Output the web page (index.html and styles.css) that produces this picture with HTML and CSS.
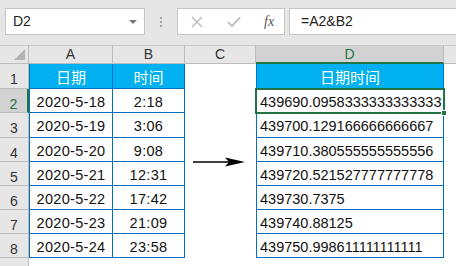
FILE: index.html
```html
<!DOCTYPE html>
<html lang="zh-CN">
<head>
  <meta charset="UTF-8">
  <title>日期时间合并</title>
  <link rel="stylesheet" href="styles.css">
</head>
<body>
  <div class="topbar">
    <div class="namebox">D2<span class="caret"></span></div>
    <div class="dots"><i></i><i></i><i></i></div>
    <div class="fxbox">
      <svg class="ico" width="12" height="12" viewBox="0 0 12 12"><path d="M1 1 L11 11 M11 1 L1 11" stroke="#b9b9b9" stroke-width="1.4" fill="none"/></svg>
      <svg class="ico" width="14" height="12" viewBox="0 0 14 12"><path d="M1 6 L5 10 L13 1.5" stroke="#c4c4c4" stroke-width="2" fill="none"/></svg>
      <span class="fx">fx</span>
    </div>
    <div class="formula">=A2&amp;B2</div>
  </div>

  <div class="sheet">
    <div class="corner"><span class="tri"></span></div>
    <div class="colhead">A</div>
    <div class="colhead">B</div>
    <div class="colhead">C</div>
    <div class="colhead sel">D</div>
    <div class="colhead last"></div>

    <div class="rowhead">1</div>
    <div class="cell t first th">日期</div>
    <div class="cell t th">时间</div>
    <div class="cell"></div>
    <div class="cell t first th">日期时间</div>
    <div class="cell"></div>

    <div class="rowhead sel">2</div>
    <div class="cell t first c">2020-5-18</div>
    <div class="cell t c">2:18</div>
    <div class="cell"></div>
    <div class="cell t first active">439690.0958333333333333<span class="handle"></span></div>
    <div class="cell"></div>

    <div class="rowhead">3</div>
    <div class="cell t first c">2020-5-19</div>
    <div class="cell t c">3:06</div>
    <div class="cell"></div>
    <div class="cell t first">439700.129166666666667</div>
    <div class="cell"></div>

    <div class="rowhead">4</div>
    <div class="cell t first c">2020-5-20</div>
    <div class="cell t c">9:08</div>
    <div class="cell"></div>
    <div class="cell t first">439710.380555555555556</div>
    <div class="cell"></div>

    <div class="rowhead">5</div>
    <div class="cell t first c">2020-5-21</div>
    <div class="cell t c">12:31</div>
    <div class="cell"></div>
    <div class="cell t first">439720.521527777777778</div>
    <div class="cell"></div>

    <div class="rowhead">6</div>
    <div class="cell t first c">2020-5-22</div>
    <div class="cell t c">17:42</div>
    <div class="cell"></div>
    <div class="cell t first">439730.7375</div>
    <div class="cell"></div>

    <div class="rowhead">7</div>
    <div class="cell t first c">2020-5-23</div>
    <div class="cell t c">21:09</div>
    <div class="cell"></div>
    <div class="cell t first">439740.88125</div>
    <div class="cell"></div>

    <div class="rowhead">8</div>
    <div class="cell t first c">2020-5-24</div>
    <div class="cell t c">23:58</div>
    <div class="cell"></div>
    <div class="cell t first">439750.998611111111111</div>
    <div class="cell"></div>

    <div class="rowhead"></div>
    <div class="cell"></div>
    <div class="cell"></div>
    <div class="cell"></div>
    <div class="cell"></div>
    <div class="cell"></div>

    <!-- 箭头形状 -->
    <svg class="arrow" width="56" height="14" viewBox="0 0 56 14">
      <path d="M0 7 L40 7" stroke="#000" stroke-width="1.4"/>
      <path d="M32 2.5 L52 7 L32 11.5 L36 7 Z" fill="#000"/>
    </svg>
  </div>
</body>
</html>
```

FILE: styles.css
```css
* {
  margin: 0;
  padding: 0;
  box-sizing: border-box;
}
html, body {
  width: 456px;
  height: 266px;
  overflow: hidden;
}
body {
  font-family: 'Liberation Sans', 'Noto Sans CJK SC', sans-serif;
  color: #222;
  background: #fff;
}

/* 编辑栏 */
.topbar {
  height: 45px;
  background: #e6e6e6;
  display: flex;
  align-items: flex-start;
  padding-top: 8px;
  padding-left: 5px;
}
.namebox {
  width: 140px;
  height: 27px;
  background: #fff;
  border: 1px solid #c6c6c6;
  font-size: 14px;
  line-height: 25px;
  padding-left: 7px;
  color: #222;
  position: relative;
}
.caret {
  position: absolute;
  right: 7px;
  top: 11px;
  border-left: 4px solid transparent;
  border-right: 4px solid transparent;
  border-top: 4px solid #777;
}
.dots {
  width: 32px;
  height: 27px;
  display: flex;
  flex-direction: column;
  align-items: center;
  justify-content: center;
  gap: 2px;
}
.dots i {
  width: 2px;
  height: 2px;
  background: #a6a6a6;
}
.fxbox {
  width: 108px;
  height: 27px;
  background: #fff;
  border: 1px solid #c6c6c6;
  display: flex;
  align-items: center;
  padding-left: 13px;
  gap: 24px;
}
.fx {
  font-family: 'Liberation Serif', serif;
  font-style: italic;
  font-size: 14px;
  color: #555;
  margin-left: -1px;
}
.formula {
  flex: 1;
  height: 27px;
  margin-left: 4px;
  background: #fff;
  border: 1px solid #c6c6c6;
  border-right: none;
  font-size: 14px;
  line-height: 25px;
  padding-left: 11px;
}

/* 表格 */
.sheet {
  position: relative;
  display: grid;
  grid-template-columns: 29px 84px 72px 71px 188px 1fr;
  grid-template-rows: 19px 25px 24px 25px 24px 24px 24px 24px 24px 9px;
}
.corner {
  background: #e6e6e6;
  border-top: 1px solid #c8c8c8;
  border-right: 1px solid #bdbdbd;
  border-bottom: 1px solid #bdbdbd;
  position: relative;
}
.tri {
  position: absolute;
  right: 3px;
  bottom: 3px;
  border-left: 11px solid transparent;
  border-bottom: 11px solid #b4b4b4;
}
.colhead {
  background: #e6e6e6;
  border-top: 1px solid #c8c8c8;
  border-right: 1px solid #bdbdbd;
  border-bottom: 1px solid #bdbdbd;
  font-size: 14px;
  text-align: center;
  line-height: 17px;
  color: #333;
}
.colhead.sel {
  background: #d2d2d2;
  border-bottom: 2px solid #217346;
  color: #217346;
}
.colhead.last {
  border-right: none;
}
.rowhead {
  background: #e6e6e6;
  border-right: 1px solid #bdbdbd;
  border-bottom: 1px solid #bdbdbd;
  font-size: 14px;
  text-align: center;
  padding-top: 7px;
  color: #333;
}
.rowhead.sel {
  background: #d2d2d2;
  border-right: 2px solid #217346;
  color: #217346;
}
.cell {
  font-size: 14.5px;
  white-space: nowrap;
  overflow: visible;
  display: flex;
  align-items: center;
  padding-left: 3px;
  padding-top: 2px;
}
.t {
  border-right: 1px solid #0070c0;
  border-bottom: 1px solid #0070c0;
  color: #111;
}
.t.first {
  border-left: 1px solid #0070c0;
}
.th {
  background: #00b0f0;
  color: #fff;
  justify-content: center;
  font-family: 'Noto Sans CJK SC', sans-serif;
  font-size: 15px;
  padding-left: 0;
  padding-top: 0;
}
.c {
  justify-content: center;
  padding-left: 0;
  letter-spacing: 0.3px;
}
.active {
  position: relative;
  outline: 2px solid #217346;
  outline-offset: -1px;
}
.handle {
  position: absolute;
  right: -4px;
  bottom: -4px;
  width: 6px;
  height: 6px;
  background: #217346;
  border: 1px solid #fff;
}
.arrow {
  position: absolute;
  left: 193px;
  top: 110px;
}
```
